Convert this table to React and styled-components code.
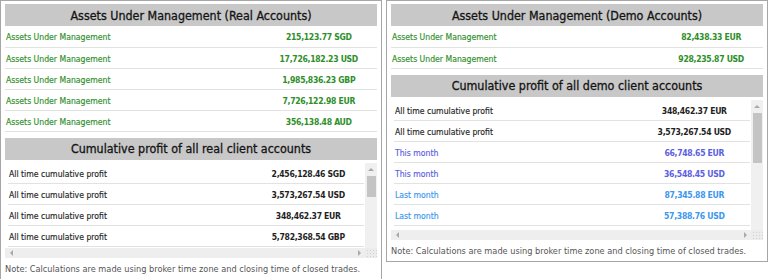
import React from 'react';
import styled, { createGlobalStyle, css } from 'styled-components';

const GlobalStyle = createGlobalStyle`
  html, body { margin: 0; padding: 0; background: #fff; }
  body {
    font-family: "DejaVu Sans Condensed", "DejaVu Sans", sans-serif;
    color: #222;
  }
`;

const tones = {
  green: '#2e8f2a',
  dark: '#1f1f1f',
  indigo: '#5b60e2',
  sky: '#3c97ee',
};

const Page = styled.div`
  display: flex;
  align-items: flex-start;
  gap: 4px;
`;

const Panel = styled.section`
  box-sizing: border-box;
  width: 382px;
  border: 1px solid #a6a6a6;
  padding: 3px 4px 2px 4px;
  background: #fff;
`;

const Title = styled.h2`
  margin: ${(p) => (p.$spaced ? '6px 0 0' : '0')};
  height: 22px;
  display: flex;
  align-items: center;
  justify-content: center;
  background: #c8c8c8;
  font-size: 12.4px;
  font-weight: normal;
  color: #141414;
  -webkit-text-stroke: 0.3px #141414;
  white-space: nowrap;
`;

const Table = styled.table`
  width: 100%;
  border-collapse: collapse;
  font-size: 8.6px;
`;

const Row = styled.tr`
  height: 21px;
  color: ${(p) => tones[p.$tone]};
`;

const cellBase = css`
  padding: 2px 0 0 0;
  border-bottom: 1px solid #e2e2e2;
  white-space: nowrap;
  vertical-align: middle;
`;

const LabelCell = styled.td`
  ${cellBase};
  width: 100%;
  padding-left: 1px;
  -webkit-text-stroke: 0.15px currentColor;
`;

const ValueCell = styled.td`
  ${cellBase};
  padding-left: 19px;
  padding-right: 19px;
  text-align: center;
  font-weight: bold;
  letter-spacing: -0.3px;
`;

const ScrollFrame = styled.div`
  margin-top: 3px;
  display: grid;
  grid-template-columns: 1fr 12px;
  grid-template-rows: ${(p) => p.$height}px 10px;
`;

const Viewport = styled.div`
  overflow: hidden;
  padding: 0 1px 0 3px;
`;

const VTrack = styled.div`
  background: #f0f0f0;
  display: flex;
  flex-direction: column;
  align-items: center;
  overflow: hidden;
`;

const HTrack = styled.div`
  background: #eeeeee;
  display: flex;
  justify-content: space-between;
  align-items: center;
`;

const arrowShapes = {
  up: css`
    border-left: 3px solid transparent;
    border-right: 3px solid transparent;
    border-bottom: 3px solid #a9a9a9;
  `,
  left: css`
    border-top: 3px solid transparent;
    border-bottom: 3px solid transparent;
    border-right: 3px solid #a9a9a9;
  `,
  right: css`
    border-top: 3px solid transparent;
    border-bottom: 3px solid transparent;
    border-left: 3px solid #a9a9a9;
  `,
};

const ArrowButton = styled.div`
  flex: none;
  display: flex;
  align-items: center;
  justify-content: center;
  width: ${(p) => (p.$dir === 'up' ? '100%' : '12px')};
  height: ${(p) => (p.$dir === 'up' ? '13px' : '100%')};
  &::before {
    content: '';
    width: 0;
    height: 0;
    ${(p) => arrowShapes[p.$dir]};
  }
`;

const Thumb = styled.div`
  flex: none;
  width: 9px;
  background: #c4c4c4;
`;

const Corner = styled.div`
  background-color: #ececec;
  background-image: radial-gradient(circle, #d2d2d2 0.8px, transparent 1px);
  background-size: 3px 3px;
  background-position: 1px 1px;
`;

const Note = styled.p`
  margin: 0;
  padding-top: 4px;
  font-size: 9.15px;
  line-height: 15px;
  color: #555;
  white-space: nowrap;
`;

function DataTable({ rows }) {
  return (
    <Table>
      <tbody>
        {rows.map(([label, value, tone], i) => (
          <Row key={i} $tone={tone}>
            <LabelCell>{label}</LabelCell>
            <ValueCell>{value}</ValueCell>
          </Row>
        ))}
      </tbody>
    </Table>
  );
}

function ScrollTable({ rows, height, thumb }) {
  return (
    <ScrollFrame $height={height}>
      <Viewport>
        <DataTable rows={rows} />
      </Viewport>
      <VTrack>
        <ArrowButton $dir="up" />
        <Thumb style={{ height: thumb }} />
      </VTrack>
      <HTrack>
        <ArrowButton $dir="left" />
        <ArrowButton $dir="right" />
      </HTrack>
      <Corner />
    </ScrollFrame>
  );
}

const NOTE = 'Note: Calculations are made using broker time zone and closing time of closed trades.';
const AUM = 'Assets Under Management';
const ALL = 'All time cumulative profit';

const realAum = [
  [AUM, '215,123.77 SGD', 'green'],
  [AUM, '17,726,182.23 USD', 'green'],
  [AUM, '1,985,836.23 GBP', 'green'],
  [AUM, '7,726,122.98 EUR', 'green'],
  [AUM, '356,138.48 AUD', 'green'],
];

const realProfit = [
  [ALL, '2,456,128.46 SGD', 'dark'],
  [ALL, '3,573,267.54 USD', 'dark'],
  [ALL, '348,462.37 EUR', 'dark'],
  [ALL, '5,782,368.54 GBP', 'dark'],
];

const demoAum = [
  [AUM, '82,438.33 EUR', 'green'],
  [AUM, '928,235.87 USD', 'green'],
];

const demoProfit = [
  [ALL, '348,462.37 EUR', 'dark'],
  [ALL, '3,573,267.54 USD', 'dark'],
  ['This month', '66,748.65 EUR', 'indigo'],
  ['This month', '36,548.45 USD', 'indigo'],
  ['Last month', '87,345.88 EUR', 'sky'],
  ['Last month', '57,388.76 USD', 'sky'],
];

export default function App() {
  return (
    <>
      <GlobalStyle />
      <Page>
        <Panel>
          <Title>Assets Under Management (Real Accounts)</Title>
          <DataTable rows={realAum} />
          <Title $spaced>Cumulative profit of all real client accounts</Title>
          <ScrollTable rows={realProfit} height={85} thumb={21} />
          <Note>{NOTE}</Note>
        </Panel>
        <Panel>
          <Title>Assets Under Management (Demo Accounts)</Title>
          <DataTable rows={demoAum} />
          <Title $spaced>Cumulative profit of all demo client accounts</Title>
          <ScrollTable rows={demoProfit} height={130} thumb={50} />
          <Note>{NOTE}</Note>
        </Panel>
      </Page>
    </>
  );
}
